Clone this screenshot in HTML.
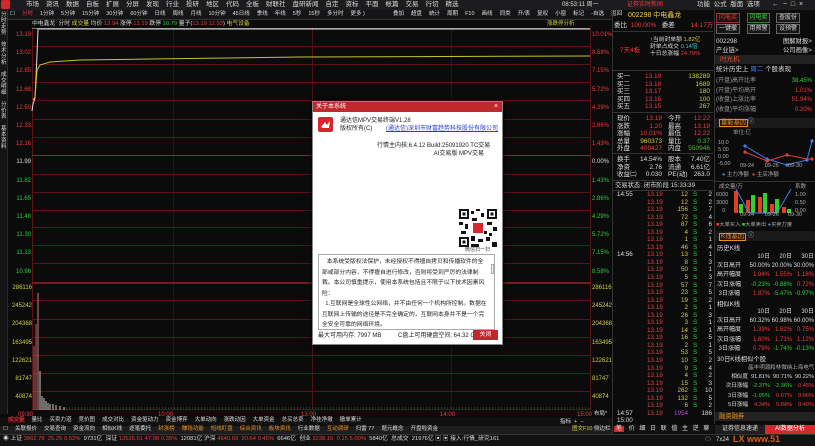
<!DOCTYPE html>
<html><head><meta charset="utf-8"><style>
*{margin:0;padding:0;box-sizing:border-box}
body{width:815px;height:446px;background:#0b0b0b;font-family:"Liberation Sans","Noto Sans CJK SC",sans-serif;font-size:7px;color:#ccc;position:relative;overflow:hidden}
.a{position:absolute;white-space:nowrap;line-height:1}
.r{color:#f03a3e}.g{color:#2ecb3a}.y{color:#d0d040}.w{color:#ddd}.c{color:#3ec8d0}.m{color:#c040e0}
.hl{position:absolute;left:32px;width:558px;height:1px;background:#5c1216}
.vl{position:absolute;top:27px;height:383px;width:1px;background:#2a1416}
.tb span{margin-right:7px}
.btn{position:absolute;border:1px solid #666;color:#ddd;font-size:6px;text-align:center;line-height:8px;height:10px;background:#151515}
.kt{position:absolute;left:715px;width:100px;font-size:6px}
.kt div{height:9.2px;line-height:9.2px;white-space:nowrap}
.kt span{display:inline-block;text-align:right;overflow:hidden}
.kt .l{width:33px;text-align:left;color:#ddd;padding-left:2px}
.kt .v{width:22px}
</style></head><body>
<!-- top menu -->
<div class="a" style="left:0;top:0;width:815px;height:10px;background:#1c1c1e"></div>
<div class="a" style="left:1px;top:0;width:9px;height:9px;background:#d8262c;border-radius:2px"></div>
<div class="a w tb" style="left:26px;top:2px;font-size:6.5px"><span>市场</span><span>资讯</span><span>数据</span><span>自板</span><span>扩展</span><span>分屏</span><span>发现</span><span>行业</span><span>投研</span><span>地区</span><span>代码</span><span>全板</span><span>财联社</span><span>盘研新闻</span><span>自定</span><span>资标</span><span>平面</span><span>帐篇</span><span>交易</span><span>行切</span><span>精选</span></div>
<div class="a w" style="left:562px;top:2px;font-size:6px">08:53:11 周一</div>
<div class="a r" style="left:627px;top:2px;font-size:6px">证券实时新闻</div>
<div class="a w" style="left:697px;top:2px;font-size:6.5px">功能 &nbsp;公式 &nbsp;版面 &nbsp;选项</div>
<div class="a w" style="left:772px;top:1px;font-size:7px">← &nbsp;− &nbsp;□ &nbsp;×</div>
<!-- period tabs -->
<div class="a" style="left:8px;top:10px;width:604px;height:10px;background:#151517;border-bottom:1px solid #333"></div>
<div class="a w tb" style="left:10px;top:12px;font-size:5.5px"><span>☐</span><span class="r">分时</span><span>1分钟</span><span>5分钟</span><span>15分钟</span><span>30分钟</span><span>60分钟</span><span>日线</span><span>周线</span><span>月线</span><span>10分钟</span><span>45日线</span><span>季线</span><span>年线</span><span>5秒</span><span>15秒</span><span>多分时</span><span>更多 )</span></div>
<div class="a w tb" style="left:393px;top:12px;font-size:5.5px"><span>叠加</span><span>超盘</span><span>统计</span><span>周期</span><span>F10</span><span>画线</span><span>同类</span><span>开/表</span><span>复权</span><span>小窗</span><span>标记</span><span>-自选</span><span>返回</span></div>
<!-- left vertical tabs -->
<div class="a" style="left:0;top:10px;width:8px;height:404px;background:#151517;border-right:1px solid #333"></div>
<div class="a w" style="left:1px;top:12px;font-size:5.5px;line-height:6px;white-space:normal;width:6px">分时走势<br><br>技术分析<br><br>成交明细<br><br>分价表<br><br>基本资料</div>
<!-- info line -->
<div class="a" style="left:32px;top:22px;font-size:5.8px"><span class="w">中电鑫龙 &nbsp;分时</span> <span class="y">成交量</span> <span class="w">均价</span> <span class="r">12.94</span> <span class="w">涨停</span> <span class="r">13.19</span> <span class="w">跌停</span> <span class="g">10.79</span> <span class="w">量子(</span><span class="r">13.19 12.93</span><span class="w">)</span> <span class="y">电气设备</span></div>
<div class="a y" style="left:547px;top:22px;font-size:5.5px">涨跌停分析</div>
<!-- chart frame -->
<div class="a" style="left:32px;top:27px;width:1px;height:383px;background:#5c1216"></div>
<div class="a" style="left:590px;top:27px;width:1px;height:383px;background:#5c1216"></div>
<div class="a" style="left:7px;top:27px;width:1px;height:383px;background:#5c1216"></div>
<div class="vl" style="left:173px"></div><div class="vl" style="left:312px;background:#4a1418"></div><div class="vl" style="left:451px"></div>
<div class="hl" style="top:28px;background:#777"></div>
<div class="hl" style="top:46px"></div><div class="hl" style="top:64px"></div><div class="hl" style="top:82px"></div><div class="hl" style="top:100px"></div><div class="hl" style="top:119px"></div><div class="hl" style="top:137px"></div><div class="hl" style="top:155px;background:#803030"></div><div class="hl" style="top:174px"></div><div class="hl" style="top:192px"></div><div class="hl" style="top:210px"></div><div class="hl" style="top:227px"></div><div class="hl" style="top:245px"></div><div class="hl" style="top:263px"></div><div class="hl" style="top:282px;height:2px;background:#7a1a1e"></div><div class="hl" style="top:300px"></div><div class="hl" style="top:319px"></div><div class="hl" style="top:337px"></div><div class="hl" style="top:355px"></div><div class="hl" style="top:373px"></div><div class="hl" style="top:391px"></div><div class="hl" style="top:409px"></div>
<!-- left axis -->
<div class="a" style="left:9px;top:26px;font-size:6px;line-height:18.2px;text-align:right;width:22px"><span class="r">13.19<br>13.02<br>12.85<br>12.68<br>12.50<br>12.33<br>12.16</span><br><span class="w">11.99</span><br><span class="g">11.82<br>11.65<br>11.48<br>11.30<br>11.13<br>10.96</span></div>
<div class="a y" style="left:8px;top:279px;font-size:6px;line-height:18.2px;text-align:right;width:24px">286116<br>245242<br>204368<br>163495<br>122621<br>81747<br>40874</div>
<!-- right axis -->
<div class="a" style="left:592px;top:26px;font-size:6px;line-height:18.2px"><span class="r">10.01%<br>8.58%<br>7.15%<br>5.72%<br>4.29%<br>2.86%<br>1.43%</span><br><span class="w">0.00%</span><br><span class="g">1.43%<br>2.86%<br>4.29%<br>5.72%<br>7.15%<br>8.58%</span></div>
<div class="a y" style="left:592px;top:279px;font-size:6px;line-height:18.2px">286116<br>245242<br>204368<br>163495<br>122621<br>81747<br>40874</div>
<!-- lines -->
<svg class="a" style="left:0;top:0" width="612" height="414">
<polyline points="32,111 33,104 35,98 37,55 38,29 590,29" fill="none" stroke="#ddd" stroke-width="1"/>
<polyline points="33,100 35,97 37,70 40,65 50,62 80,60 150,59 300,57 590,56" fill="none" stroke="#c8c030" stroke-width="1"/>
<g stroke="#ccc" stroke-width="1">
<line x1="34" y1="410" x2="34" y2="346" stroke="#b06060"/><line x1="36" y1="410" x2="36" y2="324" stroke="#b06060"/><line x1="38" y1="410" x2="38" y2="293" stroke="#c08080"/><line x1="40" y1="410" x2="40" y2="371"/><line x1="42" y1="410" x2="42" y2="396"/><line x1="44" y1="410" x2="44" y2="398"/><line x1="46" y1="410" x2="46" y2="401"/><line x1="48" y1="410" x2="48" y2="403"/><line x1="50" y1="410" x2="50" y2="404"/><line x1="53" y1="410" x2="53" y2="404"/><line x1="56" y1="410" x2="56" y2="405"/><line x1="60" y1="410" x2="60" y2="406"/><line x1="64" y1="410" x2="64" y2="407"/>
</g>
<line x1="66" y1="408" x2="590" y2="408" stroke="#555" stroke-width="1" stroke-dasharray="1,2"/>
</svg>
<div class="a r" style="left:18px;top:412px;font-size:6px">09:30</div>
<div class="a r" style="left:158px;top:412px;font-size:6px">10:00</div>
<div class="a r" style="left:301px;top:412px;font-size:6px">13:00</div>
<div class="a r" style="left:440px;top:412px;font-size:6px">14:00</div>
<div class="a r" style="left:577px;top:412px;font-size:6px">15:00</div>
<div class="a w" style="left:594px;top:412px;font-size:5.5px">布局*</div>
<!-- bottom tabs -->
<div class="a" style="left:0;top:418px;width:612px;height:7px;background:#111"></div>
<div class="a w tb" style="left:8px;top:418px;font-size:5.5px"><span class="r" style="background:#3a1010">成交量</span><span>量比</span><span>买卖力道</span><span>竞价图</span><span>成交对比</span><span>资金驱动力</span><span>资金博弈</span><span>大单动向</span><span>涨跌动因</span><span>大单资金</span><span>总买总卖</span><span>净挂净撤</span><span>撤单累计</span></div>
<div class="a w" style="left:560px;top:420px;font-size:5.5px">指标 &nbsp;+ &nbsp;−</div>
<div class="a" style="left:0;top:426px;width:612px;height:8px;background:#1d1d1f"></div>
<div class="a w tb" style="left:3px;top:427px;font-size:5.5px"><span>☐</span><span>关联报价</span><span>交易查询</span><span>资金流向</span><span>相似K线</span><span>逐笔委托</span><span style="color:#e89020">封涨榜</span><span style="color:#e89020">赚钱功能</span><span style="color:#e89020">短线盯盘</span><span style="color:#e89020">综合资讯</span><span style="color:#e89020">板块资讯</span><span>行业数据</span><span style="color:#e89020">互动调研</span><span>扫雷 77</span><span>题元概念</span><span>开盘啦资金</span></div>
<div class="a y" style="left:572px;top:427px;font-size:5.5px">图文F10 <span class="w">侧边栏</span></div>
<!-- status bar -->
<div class="a" style="left:0;top:434px;width:815px;height:12px;background:#121212;border-top:1px solid #333"></div>
<div class="a" style="left:3px;top:437px;font-size:5.8px"><span class="w">◉ 上证</span> <span class="r">3862.78</span> &nbsp;<span class="r">25.25</span> <span class="r">0.52%</span> &nbsp;<span class="w">9731亿</span> &nbsp;<span class="w">深证</span> <span class="r">13526.51</span> <span class="r">47.08</span> <span class="r">0.35%</span> &nbsp;<span class="w">12081亿</span> <span class="w">沪深</span> <span class="r">4640.69</span> &nbsp;<span class="r">20.64</span> <span class="r">0.45%</span> &nbsp;<span class="w">6646亿</span> &nbsp;<span class="w">创业</span> <span class="r">3238.16</span> &nbsp;<span class="r">0.15</span> <span class="r">5.00%</span> &nbsp;<span class="w">5840亿</span> &nbsp;<span class="w">总成交 &nbsp;21976亿 ▣ ▣ 接入:行情_研究161</span></div>
<div class="a w" style="left:705px;top:437px;font-size:6px">☁ &nbsp;&nbsp;7x24</div>
<div class="a" style="left:733px;top:435px;font-size:9px;color:#d06020;font-weight:bold">LX www.51</div>
<!-- right panel -->
<div class="a" style="left:612px;top:10px;width:1px;height:424px;background:#333"></div>
<div class="a" style="left:714px;top:10px;width:1px;height:414px;background:#333"></div>
<div class="a" style="left:628px;top:12px;font-size:7px;color:#e8d040">002298 中电鑫龙</div>
<div class="a" style="left:614px;top:23px;font-size:6.5px"><span class="w">委比</span> <span class="r">&nbsp;100.00%</span> &nbsp;&nbsp;<span class="w">委差</span> <span class="r" style="margin-left:14px">14.17万</span></div>
<div class="a" style="left:613px;top:31px;width:100px;height:1px;background:#333"></div>
<div class="a" style="left:650px;top:37px;font-size:5.8px;line-height:7px"><span class="w">↑当前封单额</span> <span class="y">1.82亿</span><br><span class="w">封单占成交</span> <span class="c">0.14倍</span><br><span class="w">十日总涨幅</span> <span class="r">24.79%</span></div>
<div class="a r" style="left:620px;top:48px;font-size:6.5px">7天4板</div>
<div class="a" style="left:613px;top:70px;width:100px;height:1px;background:#333"></div>
<div class="a" style="left:617px;top:73px;font-size:6.5px;line-height:7.6px"><span class="w">买一<br>买二<br>买三<br>买四<br>买五</span></div>
<div class="a r" style="left:645px;top:73px;font-size:6.5px;line-height:7.6px">13.19<br>13.18<br>13.17<br>13.16<br>13.15</div>
<div class="a y" style="left:680px;top:73px;font-size:6.5px;line-height:7.6px;text-align:right;width:30px">138289<br>1689<br>180<br>100<br>267</div>
<div class="a" style="left:613px;top:112px;width:100px;height:1px;background:#333"></div>
<div class="a w" style="left:617px;top:115px;font-size:6.5px;line-height:7.6px">现价<br>涨跌<br>涨幅<br>总量<br>外盘</div>
<div class="a" style="left:640px;top:115px;font-size:6.5px;line-height:7.6px;text-align:right;width:22px"><span class="r">13.19<br>1.20<br>10.01%</span><br><span class="y">960373</span><br><span class="r">409427</span></div>
<div class="a w" style="left:668px;top:115px;font-size:6.5px;line-height:7.6px">今开<br>最高<br>最低<br>量比<br>内盘</div>
<div class="a" style="left:685px;top:115px;font-size:6.5px;line-height:7.6px;text-align:right;width:25px"><span class="r">12.22<br>13.19<br>12.22</span><br><span class="g">0.37<br>550946</span></div>
<div class="a" style="left:613px;top:153px;width:100px;height:1px;background:#333"></div>
<div class="a w" style="left:617px;top:156px;font-size:6.5px;line-height:7.6px">换手<br>净资<br>收益㈡</div>
<div class="a w" style="left:640px;top:156px;font-size:6.5px;line-height:7.6px;text-align:right;width:22px">14.54%<br>2.76<br>0.030</div>
<div class="a w" style="left:668px;top:156px;font-size:6.5px;line-height:7.6px">股本<br>流通<br>PE(动)</div>
<div class="a w" style="left:685px;top:156px;font-size:6.5px;line-height:7.6px;text-align:right;width:25px">7.40亿<br>6.61亿<br>263.0</div>
<div class="a" style="left:613px;top:180px;width:100px;height:1px;background:#333"></div>
<div class="a w" style="left:615px;top:183px;font-size:6.3px">交易状态: 闭市阶段 15:33:39</div>
<div class="a" style="left:613px;top:190px;width:100px;height:1px;background:#333"></div>
<div class="a w" style="left:617px;top:191px;font-size:6.3px;line-height:7.55px">14:55<br><br><br><br><br><br><br><br>14:56<br><br><br><br><br><br><br><br><br><br><br><br><br><br><br><br><br><br><br><br><br>14:57<br>15:00</div>
<div class="a r" style="left:647px;top:191px;font-size:6.3px;line-height:7.55px">13.19<br>13.19<br>13.19<br>13.19<br>13.19<br>13.19<br>13.19<br>13.19<br>13.19<br>13.19<br>13.19<br>13.19<br>13.19<br>13.19<br>13.19<br>13.19<br>13.19<br>13.19<br>13.19<br>13.19<br>13.19<br>13.19<br>13.19<br>13.19<br>13.19<br>13.19<br>13.19<br>13.19<br>13.19<br>13.19</div>
<div class="a y" style="left:670px;top:191px;font-size:6.3px;line-height:7.55px;text-align:right;width:18px">12<br>12<br>156<br>72<br>87<br>4<br>1<br>46<br>13<br>8<br>50<br>5<br>57<br>23<br>19<br>2<br>26<br>3<br>14<br>16<br>2<br>53<br>10<br>9<br>4<br>15<br>262<br>132<br>6<br><span class="m">1954</span></div>
<div class="a g" style="left:693px;top:191px;font-size:6.3px;line-height:7.55px">S<br>S<br>S<br>S<br>S<br>S<br>S<br>S<br>S<br>S<br>S<br>S<br>S<br>S<br>S<br>S<br>S<br>S<br>S<br>S<br>S<br>S<br>S<br>S<br>S<br>S<br>S<br>S<br>S</div>
<div class="a w" style="left:700px;top:191px;font-size:6.3px;line-height:7.55px;text-align:right;width:12px">2<br>2<br>7<br>4<br>6<br>2<br>1<br>4<br>1<br>3<br>1<br>3<br>7<br>5<br>2<br>1<br>3<br>1<br>1<br>5<br>1<br>5<br>2<br>4<br>2<br>3<br>10<br>5<br>2<br>186</div>
<div class="a" style="left:613px;top:425px;width:101px;height:9px;background:#111"></div>
<div class="a w" style="left:614px;top:426px;font-size:6px;word-spacing:3px"><span style="background:#d02a2e;padding:0 2px">笔</span> 价 细 日 联 值 主 逆 聊</div>
<!-- right-right -->
<div class="btn" style="left:716px;top:13px;width:24px;color:#f04040;border-color:#a03030">闪电买</div>
<div class="btn" style="left:747px;top:13px;width:23px;color:#40d040;border-color:#308030">闪电卖</div>
<div class="btn" style="left:776px;top:13px;width:24px">查股份</div>
<div class="btn" style="left:716px;top:24px;width:24px">一键撤</div>
<div class="btn" style="left:747px;top:24px;width:23px">用预警</div>
<div class="btn" style="left:776px;top:24px;width:24px">设预警</div>
<div class="a w" style="left:716px;top:37px;font-size:6.3px;line-height:9px">002298<br>产业链&gt;</div>
<div class="a w" style="left:783px;top:37px;font-size:6.3px;line-height:9px">图解财报&gt;<br>公司画像&gt;</div>
<div class="a" style="left:715px;top:55px;width:100px;height:9px;background:#222"></div>
<div class="a" style="left:720px;top:57px;font-size:6.5px;color:#e05030">时光机</div>
<div class="a w" style="left:716px;top:67px;font-size:6.5px">统计历史上 <span style="color:#4080ff">周二</span> 个股表现</div>
<div class="a w" style="left:716px;top:77px;font-size:6px;line-height:9.7px;color:#999">(开盘)高开比率<br>(开盘)平均高开<br>(收盘)上涨比率<br>(收盘)平均涨幅</div>
<div class="a" style="left:780px;top:77px;font-size:6px;line-height:9.7px;text-align:right;width:32px"><span class="g">38.45%</span><br><span class="r">1.01%<br>51.94%<br>0.20%</span></div>
<div class="a" style="left:715px;top:118px;width:100px;height:10px;background:#1a1a1a"></div>
<div class="a" style="left:719px;top:119px;font-size:6.3px;color:#e89020;border:1px solid #e89020;padding:0 1px">量能基因</div><div class="a w" style="left:748px;top:119px;font-size:6px">ⓘ</div>
<div class="a w" style="left:733px;top:131px;font-size:5.5px;color:#999">单位:亿</div>
<div class="a w" style="left:718px;top:140px;font-size:5.5px;line-height:7px;color:#aaa">10.0<br>5.00<br>0.00<br>-5.00</div>
<svg class="a" style="left:735px;top:138px" width="80" height="32"><polyline points="10,8 32,21 52,27 72,22 77,3" fill="none" stroke="#4080e0"/><polyline points="10,14 32,23 52,17 72,21 77,21" fill="none" stroke="#e04040"/><g fill="#4080e0"><circle cx="10" cy="8" r="1.6"/><circle cx="32" cy="21" r="1.6"/><circle cx="52" cy="27" r="1.6"/><circle cx="72" cy="22" r="1.6"/><circle cx="77" cy="3" r="1.6"/></g><g fill="#e04040"><circle cx="10" cy="14" r="1.6"/><circle cx="32" cy="23" r="1.6"/><circle cx="52" cy="17" r="1.6"/><circle cx="77" cy="21" r="1.6"/></g></svg>
<div class="a w" style="left:740px;top:164px;font-size:5.5px;color:#aaa">09-24 &nbsp;&nbsp;&nbsp;&nbsp;&nbsp;&nbsp;09-26 &nbsp;&nbsp;&nbsp;&nbsp;&nbsp;09-30</div>
<div class="a" style="left:722px;top:173px;font-size:5.5px;color:#aaa"><span style="color:#4080e0">●</span> 主力净额 &nbsp;<span class="r">●</span> 主买净额</div>
<div class="a" style="left:715px;top:181px;width:100px;height:1px;background:#333"></div>
<div class="a" style="left:716px;top:183px;font-size:5.5px;color:#aaa;line-height:8px">&nbsp;&nbsp;成交量/万<br>6000<br>3000<br>&nbsp;&nbsp;&nbsp;&nbsp;0</div>
<div class="a" style="left:795px;top:183px;font-size:5.5px;color:#aaa;line-height:8px">系数<br>1.00<br>0.50<br>0.00</div>
<svg class="a" style="left:733px;top:187px" width="62" height="28"><g fill="#e04020"><rect x="1" y="4" width="4" height="22"/><rect x="13" y="13" width="4" height="13"/><rect x="25" y="10" width="4" height="16"/><rect x="37" y="17" width="4" height="9"/><rect x="49" y="20" width="4" height="6"/></g><g fill="#30d030"><rect x="6" y="17" width="4" height="9"/><rect x="18" y="8" width="4" height="18"/><rect x="30" y="6" width="4" height="20"/><rect x="42" y="12" width="4" height="14"/><rect x="54" y="22" width="4" height="4"/></g><polyline points="3,2 16,26 30,26 44,26 58,2" fill="none" stroke="#4080e0"/></svg>
<div class="a w" style="left:740px;top:213px;font-size:5.5px;color:#aaa">09-24 &nbsp;&nbsp;&nbsp;&nbsp;&nbsp;&nbsp;09-26 &nbsp;&nbsp;&nbsp;&nbsp;&nbsp;09-30</div>
<div class="a" style="left:716px;top:223px;font-size:5.3px;color:#aaa"><span class="r">■</span>大单买入 <span class="g">■</span>大单卖出 <span style="color:#4080e0">●</span>买卖力度</div>
<div class="a" style="left:715px;top:231px;width:100px;height:10px;background:#1a1a1a"></div>
<div class="a" style="left:719px;top:233px;font-size:6.3px;color:#e89020;border:1px solid #e89020;padding:0 1px">K线基因</div><div class="a w" style="left:748px;top:233px;font-size:6px">ⓘ</div>
<div class="a w" style="left:717px;top:246px;font-size:6.3px">历史K线</div>
<div class="kt" style="top:253px">
<div><span class="l"></span><span class="v w">10日</span><span class="v w">20日</span><span class="v w">30日</span></div>
<div><span class="l">次日高开</span><span class="v w">50.00%</span><span class="v w">20.00%</span><span class="v w">30.00%</span></div>
<div><span class="l">高开幅度</span><span class="v r">1.94%</span><span class="v r">1.55%</span><span class="v r">1.18%</span></div>
<div><span class="l">次日涨幅</span><span class="v g">-0.23%</span><span class="v g">-0.88%</span><span class="v r">0.72%</span></div>
<div><span class="l">&nbsp;3日涨幅</span><span class="v r">1.87%</span><span class="v g">-5.47%</span><span class="v g">-0.97%</span></div>
</div>
<div class="a w" style="left:717px;top:302px;font-size:6.3px">相似K线</div>
<div class="kt" style="top:308px">
<div><span class="l"></span><span class="v w">10日</span><span class="v w">20日</span><span class="v w">30日</span></div>
<div><span class="l">次日高开</span><span class="v w">60.32%</span><span class="v w">60.98%</span><span class="v w">60.00%</span></div>
<div><span class="l">高开幅度</span><span class="v r">1.39%</span><span class="v r">1.62%</span><span class="v r">0.75%</span></div>
<div><span class="l">次日涨幅</span><span class="v r">1.60%</span><span class="v r">1.71%</span><span class="v r">1.12%</span></div>
<div><span class="l">&nbsp;3日涨幅</span><span class="v r">0.78%</span><span class="v g">-1.74%</span><span class="v g">-0.13%</span></div>
</div>
<div class="a w" style="left:717px;top:357px;font-size:6.3px">30日K线相似个股</div>
<div class="kt" style="top:364px;font-size:5.6px">
<div><span class="l"></span><span class="v" style="color:#aaa">晶丰明源</span><span class="v" style="color:#aaa">和林微纳</span><span class="v" style="color:#aaa">上海电气</span></div>
<div><span class="l" style="text-align:right">相似度</span><span class="v w">91.81%</span><span class="v w">90.71%</span><span class="v w">90.22%</span></div>
<div><span class="l" style="text-align:right">次日涨幅</span><span class="v g">-2.37%</span><span class="v g">-2.36%</span><span class="v r">0.45%</span></div>
<div><span class="l" style="text-align:right">3日涨幅</span><span class="v g">-1.95%</span><span class="v r">0.67%</span><span class="v r">0.66%</span></div>
<div><span class="l" style="text-align:right">5日涨幅</span><span class="v r">4.34%</span><span class="v r">5.84%</span><span class="v r">0.40%</span></div>
</div>
<div class="a" style="left:715px;top:412px;width:100px;height:9px;background:#222"></div>
<div class="a" style="left:719px;top:414px;font-size:6.3px;color:#e89020">融资融券</div>
<div class="a" style="left:715px;top:425px;width:50px;height:9px;background:#1e1e1e;color:#ddd;font-size:6px;text-align:center;line-height:9px">证券信息速递</div>
<div class="a" style="left:765px;top:425px;width:50px;height:9px;background:#d02a2e;color:#fff;font-size:6px;text-align:center;line-height:9px">AI数据分析</div>
<!-- dialog -->
<div class="a" style="left:312px;top:101px;width:191px;height:244px;background:#fff;border:1px solid #888;box-shadow:0 0 6px #000"></div>
<div class="a" style="left:313px;top:102px;width:189px;height:10px;background:#c0282e"></div>
<div class="a" style="left:316px;top:104px;font-size:6px;color:#fff">关于本系统</div>
<div class="a" style="left:494px;top:103px;font-size:7px;color:#fff">×</div>
<div class="a" style="left:318px;top:117px;width:15px;height:15px;background:#d8262c;border-radius:2px"></div>
<svg class="a" style="left:320px;top:119px" width="11" height="11"><path d="M1 8 L5 3 L7 6 L10 2 L9 9 L3 9 Z" fill="#fff"/></svg>
<div class="a" style="left:340px;top:117px;font-size:6px;color:#222;line-height:8px">通达信MPV交易终端V1.28<br>版权所有(C)</div>
<div class="a" style="left:386px;top:126px;font-size:6px;color:#2040d0;text-decoration:underline">(通达信)深圳市财富趋势科技股份有限公司</div>
<div class="a" style="left:377px;top:142px;font-size:6px;color:#222;line-height:8px;text-align:right;width:107px">行情主内核:6.4.12 Build:25091920 TC交易<br>AI交易版 MPV交易</div>
<svg class="a" style="left:459px;top:209px" width="38" height="38"><rect width="38" height="38" fill="#fff"/><g fill="#111"><rect x="0" y="0" width="10" height="10"/><rect x="28" y="0" width="10" height="10"/><rect x="0" y="28" width="10" height="10"/><rect x="12" y="2" width="3" height="3"/><rect x="17" y="0" width="4" height="2"/><rect x="22" y="4" width="3" height="4"/><rect x="13" y="9" width="5" height="3"/><rect x="0" y="13" width="4" height="3"/><rect x="6" y="15" width="3" height="5"/><rect x="28" y="13" width="5" height="3"/><rect x="34" y="18" width="4" height="4"/><rect x="12" y="27" width="4" height="5"/><rect x="19" y="30" width="5" height="3"/><rect x="27" y="28" width="4" height="4"/><rect x="33" y="33" width="5" height="5"/><rect x="2" y="22" width="5" height="3"/><rect x="25" y="22" width="3" height="3"/><rect x="12" y="35" width="8" height="3"/><rect x="30" y="24" width="3" height="3"/></g><g fill="#fff"><rect x="2" y="2" width="6" height="6"/><rect x="30" y="2" width="6" height="6"/><rect x="2" y="30" width="6" height="6"/></g><g fill="#111"><rect x="3.5" y="3.5" width="3" height="3"/><rect x="31.5" y="3.5" width="3" height="3"/><rect x="3.5" y="31.5" width="3" height="3"/></g><rect x="14" y="14" width="10" height="10" fill="#d8262c"/></svg>
<div class="a" style="left:465px;top:248px;font-size:5px;color:#444">微信扫一扫</div>
<div class="a" style="left:318px;top:254px;width:177px;height:76px;border:1px solid #aaa;overflow:hidden"></div>
<div class="a" style="left:322px;top:257px;height:72px;overflow:hidden;font-size:5.8px;color:#222;line-height:10.5px;white-space:normal;width:166px">&nbsp;&nbsp;&nbsp;本系统受版权法保护，未经授权不得擅自拷贝和传播软件的全部或部分内容，不得擅自进行修改，否则将受到严厉的法律制裁。本公司慎重提示，使用本系统包括且不限于以下技术因素风险：<br>&nbsp;&nbsp;1.互联网是全球性公网络，并不由任何一个机构所控制。数据在互联网上传输的途径是不完全确定的，互联网本身并不是一个完全安全可靠的网络环境。<br>&nbsp;&nbsp;2.在互联网上传输的数据有可能被某些个人、团体或机构通过某种渠道</div>
<div class="a" style="left:491px;top:264px;width:3px;height:10px;border:1px solid #aaa"></div>
<div class="a" style="left:318px;top:333px;font-size:6px;color:#222">最大可用内存: 7997 MB &nbsp;&nbsp;&nbsp;&nbsp;&nbsp;&nbsp;&nbsp;&nbsp;&nbsp;C盘上可用硬盘空间: 64.32 GB</div>
<div class="a" style="left:473px;top:330px;width:25px;height:10px;background:#c0282e;color:#fff;font-size:6px;text-align:center;line-height:10px">关闭</div>
</body></html>
